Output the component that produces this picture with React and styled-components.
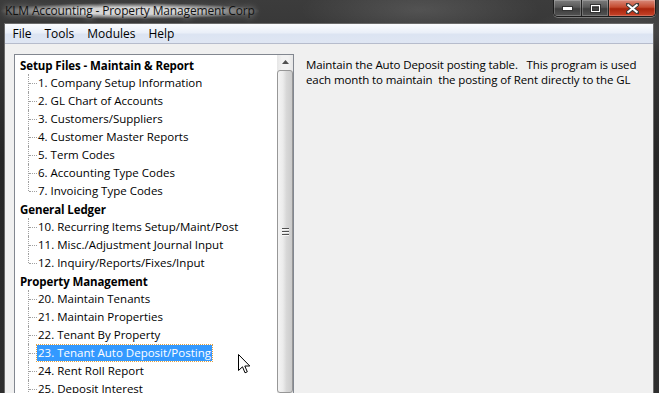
import styled, { createGlobalStyle } from "styled-components";

const GlobalStyle = createGlobalStyle`
  html, body {
    margin: 0;
    padding: 0;
    background: #2d2d2d;
  }
  * {
    box-sizing: border-box;
  }
`;

const UI_FONT = `"Open Sans", "Noto Sans", "Liberation Sans", sans-serif`;

const Window = styled.div`
  position: relative;
  width: 659px;
  height: 393px;
  display: flex;
  flex-direction: column;
  overflow: hidden;
  font-family: ${UI_FONT};
  font-size: 11.5px;
  background:
    radial-gradient(ellipse 120px 30px at 420px 10px, rgba(255, 255, 255, 0.12), transparent),
    radial-gradient(ellipse 90px 25px at 620px 30px, rgba(255, 255, 255, 0.1), transparent),
    linear-gradient(to bottom, #3c3c3c 0%, #262626 40%, #2e2e2e 100%);
`;

const TitleBar = styled.div`
  height: 23px;
  display: flex;
  align-items: flex-start;
  padding-left: 5px;
`;

const Title = styled.div`
  margin-top: 3px;
  color: #111;
  font-size: 12px;
  letter-spacing: -0.15px;
  line-height: 16px;
  white-space: nowrap;
  background: radial-gradient(ellipse at center, rgba(235, 235, 235, 0.85) 30%, rgba(200, 200, 200, 0) 72%);
  padding: 0 4px;
  margin-left: -4px;
  text-shadow: 0 0 6px rgba(255, 255, 255, 0.8);
`;

const CaptionButtons = styled.div`
  margin-left: auto;
  margin-right: 3px;
  display: flex;
  height: 17px;
  border: 1px solid #1c1c1c;
  border-top: none;
  border-radius: 0 0 5px 5px;
  overflow: hidden;
  box-shadow: 0 1px 0 rgba(255, 255, 255, 0.3);
`;

const CaptionButton = styled.div`
  width: ${(p) => p.$w}px;
  display: flex;
  align-items: center;
  justify-content: center;
  border-left: ${(p) => (p.$first ? "none" : "1px solid #222")};
  box-shadow: inset 0 0 0 1px rgba(255, 255, 255, 0.22);
  background: ${(p) =>
    p.$close
      ? "linear-gradient(to bottom, #d98a7a 0%, #c44a30 45%, #a8240c 55%, #c8442a 100%)"
      : "linear-gradient(to bottom, #7c7c7c 0%, #585858 45%, #3e3e3e 55%, #545454 100%)"};
`;

const Client = styled.div`
  flex: 1;
  margin: 0 5px 0 4px;
  border: 1px solid #6b6b6b;
  border-bottom: none;
  background: #f0f0f0;
  display: flex;
  flex-direction: column;
  min-height: 0;
`;

const MenuBar = styled.div`
  height: 20px;
  display: flex;
  align-items: center;
  padding-left: 1px;
  background: linear-gradient(to bottom, #fbfcfe 0%, #eaeff8 45%, #dce4f2 55%, #dfe6f3 100%);
  border-bottom: 1px solid #b6bccc;
  color: #000;
  font-size: 12px;
`;

const MenuItem = styled.span`
  padding: 0 6.5px;
  line-height: 19px;
`;

const Body = styled.div`
  flex: 1;
  display: flex;
  align-items: stretch;
  padding: 10px 0 0 9px;
  min-height: 0;
`;

const TreeBox = styled.div`
  width: 280px;
  background: #fff;
  border: 1px solid #828790;
  border-bottom: none;
  display: flex;
  overflow: hidden;
`;

const TreeList = styled.div`
  flex: 1;
  padding-top: 1px;
  color: #000;
`;

const HeaderRow = styled.div`
  height: 18px;
  display: flex;
  align-items: center;
  padding-left: 5px;
  font-weight: 700;
  letter-spacing: -0.1px;
  white-space: nowrap;
`;

const ItemRow = styled.div`
  height: 18px;
  display: flex;
  align-items: center;
  white-space: nowrap;
`;

const Connector = styled.span`
  position: relative;
  align-self: stretch;
  width: 9px;
  margin-left: 13px;
  &::before {
    content: "";
    position: absolute;
    left: 0;
    top: 0;
    height: ${(p) => (p.$last ? "9px" : "100%")};
    border-left: 1px dotted #a0a0a0;
  }
  &::after {
    content: "";
    position: absolute;
    left: 1px;
    top: 9px;
    width: 8px;
    border-top: 1px dotted #a0a0a0;
  }
`;

const Label = styled.span`
  padding: 0 1px;
  line-height: 16px;
  letter-spacing: 0;
  color: ${(p) => (p.$selected ? "#fff" : "#000")};
  background: ${(p) => (p.$selected ? "#3399ff" : "transparent")};
  outline: ${(p) => (p.$selected ? "1px dotted #e0a040" : "none")};
`;

const ScrollBar = styled.div`
  width: 16px;
  display: flex;
  flex-direction: column;
  background: linear-gradient(to right, #e6e6e6, #f2f2f2 30%, #f2f2f2 70%, #e6e6e6);
`;

const ArrowButton = styled.div`
  height: 18px;
  display: flex;
  align-items: center;
  justify-content: center;
`;

const Thumb = styled.div`
  height: 404px;
  margin-top: 1px;
  border: 1px solid #979797;
  border-radius: 3px;
  background: linear-gradient(to right, #f4f4f4 0%, #ececec 35%, #d8d8d8 60%, #cbcbcb 100%);
  display: flex;
  align-items: center;
  justify-content: center;
`;

const Grip = styled.div`
  display: flex;
  flex-direction: column;
  gap: 1px;
  & > span {
    display: block;
    width: 7px;
    height: 2px;
    border-top: 1px solid #505050;
    border-bottom: 1px solid #f8f8f8;
  }
`;

const Description = styled.div`
  padding: 3px 0 0 12px;
  font-size: 11.5px;
  letter-spacing: -0.1px;
  line-height: 15px;
  white-space: pre;
  color: #000;
`;

const Cursor = styled.svg`
  position: absolute;
  left: 238px;
  top: 354px;
`;

const groups = [
  {
    title: "Setup Files - Maintain & Report",
    items: [
      "1. Company Setup Information",
      "2. GL Chart of Accounts",
      "3. Customers/Suppliers",
      "4. Customer Master Reports",
      "5. Term Codes",
      "6. Accounting Type Codes",
      "7. Invoicing Type Codes",
    ],
  },
  {
    title: "General Ledger",
    items: [
      "10. Recurring Items Setup/Maint/Post",
      "11. Misc./Adjustment Journal Input",
      "12. Inquiry/Reports/Fixes/Input",
    ],
  },
  {
    title: "Property Management",
    items: [
      "20. Maintain Tenants",
      "21. Maintain Properties",
      "22. Tenant By Property",
      "23. Tenant Auto Deposit/Posting",
      "24. Rent Roll Report",
      "25. Deposit Interest",
    ],
    continues: true,
  },
];

const selected = "23. Tenant Auto Deposit/Posting";

export default function App() {
  return (
    <>
      <GlobalStyle />
      <Window>
        <TitleBar>
          <Title>KLM Accounting - Property Management Corp</Title>
          <CaptionButtons>
            <CaptionButton $w={27} $first>
              <svg width="11" height="5" viewBox="0 0 11 5">
                <rect x="0.5" y="0.5" width="10" height="4" fill="#fff" stroke="#333" />
              </svg>
            </CaptionButton>
            <CaptionButton $w={27}>
              <svg width="11" height="9" viewBox="0 0 11 9">
                <rect x="0.5" y="0.5" width="10" height="8" fill="none" stroke="#333" />
                <rect x="1.5" y="1.5" width="8" height="6" fill="none" stroke="#fff" />
                <rect x="2.5" y="3.5" width="6" height="3" fill="none" stroke="#333" />
              </svg>
            </CaptionButton>
            <CaptionButton $w={47} $close>
              <svg width="13" height="11" viewBox="0 0 13 11">
                <path
                  d="M1 1 L12 10 M12 1 L1 10"
                  stroke="#3a3a3a"
                  strokeWidth="4"
                  strokeLinecap="square"
                />
                <path
                  d="M1.5 1.5 L11.5 9.5 M11.5 1.5 L1.5 9.5"
                  stroke="#fff"
                  strokeWidth="2.2"
                />
              </svg>
            </CaptionButton>
          </CaptionButtons>
        </TitleBar>
        <Client>
          <MenuBar>
            <MenuItem>File</MenuItem>
            <MenuItem>Tools</MenuItem>
            <MenuItem>Modules</MenuItem>
            <MenuItem>Help</MenuItem>
          </MenuBar>
          <Body>
            <TreeBox>
              <TreeList>
                {groups.map((g) => (
                  <div key={g.title}>
                    <HeaderRow>{g.title}</HeaderRow>
                    {g.items.map((item, i) => (
                      <ItemRow key={item}>
                        <Connector $last={!g.continues && i === g.items.length - 1} />
                        <Label $selected={item === selected}>{item}</Label>
                      </ItemRow>
                    ))}
                  </div>
                ))}
              </TreeList>
              <ScrollBar>
                <ArrowButton>
                  <svg width="7" height="4" viewBox="0 0 7 4">
                    <path d="M0 4 L3.5 0 L7 4 Z" fill="#505050" />
                  </svg>
                </ArrowButton>
                <Thumb>
                  <Grip>
                    <span />
                    <span />
                    <span />
                  </Grip>
                </Thumb>
              </ScrollBar>
            </TreeBox>
            <Description>
              {"Maintain the Auto Deposit posting table.   This program is used\neach month to maintain  the posting of Rent directly to the GL"}
            </Description>
          </Body>
        </Client>
        <Cursor width="13" height="21" viewBox="0 0 13 21">
          <path
            d="M0.5 0.5 L0.5 16.5 L4.5 12.8 L7 18.8 L9.3 17.8 L6.8 12 L11.8 12 Z"
            fill="#fff"
            stroke="#000"
            strokeWidth="1"
            strokeLinejoin="miter"
          />
        </Cursor>
      </Window>
    </>
  );
}
